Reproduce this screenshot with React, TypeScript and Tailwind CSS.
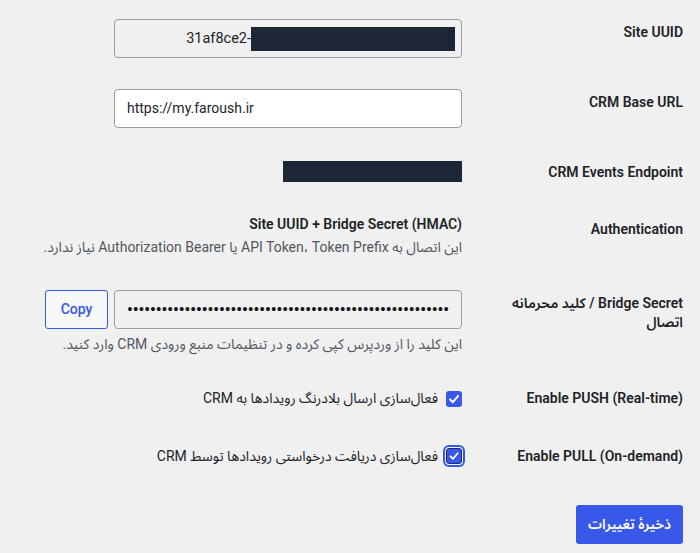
import React from "react";

const Check = () => (
  <svg viewBox="0 0 16 16" className="w-[16px] h-[16px]" fill="none">
    <path d="M4 8.4 L6.9 11.2 L12.2 4.9" stroke="#ffffff" strokeWidth="2" strokeLinecap="round" strokeLinejoin="round" />
  </svg>
);

export default function App() {
  const dots = "•".repeat(56);
  return (
    <div
      dir="rtl"
      className="min-h-[553px] w-[700px] bg-[#f0f0f1] pr-[17px] pt-[19px] text-[14px] text-[#1d2327] font-['Roboto','Noto_Sans_Arabic','DejaVu_Sans',sans-serif]"
    >
      {/* Site UUID */}
      <div className="flex items-start gap-[21px]">
        <div className="w-[200px] shrink-0 pt-[3px] leading-5 font-semibold">Site UUID</div>
        <div className="flex h-[39px] w-[348px] items-center rounded-[4px] border border-[#9a9ca0] bg-[#f0f0f1] pr-[6px]">
          <span dir="ltr" className="flex items-center text-[14.5px] text-[#1d2327]">
            31af8ce2-
            <span className="inline-block h-[24px] w-[204px] bg-[#1c2636]"></span>
          </span>
        </div>
      </div>

      {/* CRM Base URL */}
      <div className="mt-[31px] flex items-start gap-[21px]">
        <div className="w-[200px] shrink-0 pt-[3px] leading-5 font-semibold">CRM Base URL</div>
        <div
          dir="ltr"
          className="flex h-[39px] w-[348px] items-center rounded-[4px] border border-[#9a9ca0] bg-white pl-[12px]"
        >
          https://my.faroush.ir
        </div>
      </div>

      {/* CRM Events Endpoint */}
      <div className="mt-[33px] flex items-center gap-[21px]">
        <div className="w-[200px] shrink-0 leading-5 font-semibold">CRM Events Endpoint</div>
        <div className="h-[21px] w-[179px] bg-[#1c2636]"></div>
      </div>

      {/* Authentication */}
      <div className="mt-[32px] flex items-start gap-[21px]">
        <div className="w-[200px] shrink-0 pt-[5px] leading-5 font-semibold">Authentication</div>
        <div>
          <div className="leading-5 font-semibold text-[#1d2327]">Site UUID + Bridge Secret (HMAC)</div>
          <div className="mt-[3px] leading-5 text-[#50575e]">
            این اتصال به API Token، Token Prefix یا Authorization Bearer نیاز ندارد.
          </div>
        </div>
      </div>

      {/* Bridge Secret */}
      <div className="mt-[33px] flex items-start gap-[21px]">
        <div className="w-[200px] shrink-0 pt-[4px] leading-[19px] font-semibold">
          Bridge Secret / کلید محرمانه
          <br />
          اتصال
        </div>
        <div>
          <div className="flex items-center gap-[6px]">
            <div
              dir="ltr"
              className="flex h-[39px] w-[348px] items-center overflow-hidden rounded-[4px] border border-[#9a9ca0] bg-[#f0f0f1] pl-[12px] whitespace-nowrap text-[16px] font-bold text-[#111111]"
            >
              {dots}
            </div>
            <button className="h-[39px] w-[63px] rounded-[3px] border border-[#3858e9] bg-[#f6f7f7] font-medium text-[#3858e9]">
              Copy
            </button>
          </div>
          <div className="mt-[5px] leading-5 text-[#50575e]">
            این کلید را از وردپرس کپی کرده و در تنظیمات منبع ورودی CRM وارد کنید.
          </div>
        </div>
      </div>

      {/* Enable PUSH */}
      <div className="mt-[34px] flex h-[20px] items-center gap-[21px]">
        <div className="w-[200px] shrink-0 leading-5 font-semibold">Enable PUSH (Real-time)</div>
        <label className="flex items-center gap-[8px]">
          <span className="mt-[2px] flex h-[16px] w-[16px] items-center justify-center rounded-[3px] bg-[#3858e9]">
            <Check />
          </span>
          <span className="leading-5">فعال‌سازی ارسال بلادرنگ رویدادها به CRM</span>
        </label>
      </div>

      {/* Enable PULL */}
      <div className="mt-[38px] flex h-[20px] items-center gap-[21px]">
        <div className="w-[200px] shrink-0 leading-5 font-semibold">Enable PULL (On-demand)</div>
        <label className="flex items-center gap-[8px]">
          <span className="flex h-[16px] w-[16px] items-center justify-center rounded-[3px] border border-[#1e2b5e] bg-[#3858e9] ring-2 ring-[#3858e9] ring-offset-1 ring-offset-[#f0f0f1]">
            <Check />
          </span>
          <span className="leading-5">فعال‌سازی دریافت درخواستی رویدادها توسط CRM</span>
        </label>
      </div>

      {/* Submit */}
      <div className="mt-[39px]">
        <button className="h-[39px] w-[107px] rounded-[3px] bg-[#3858e9] font-semibold text-white">
          ذخیرهٔ تغییرات
        </button>
      </div>
    </div>
  );
}
